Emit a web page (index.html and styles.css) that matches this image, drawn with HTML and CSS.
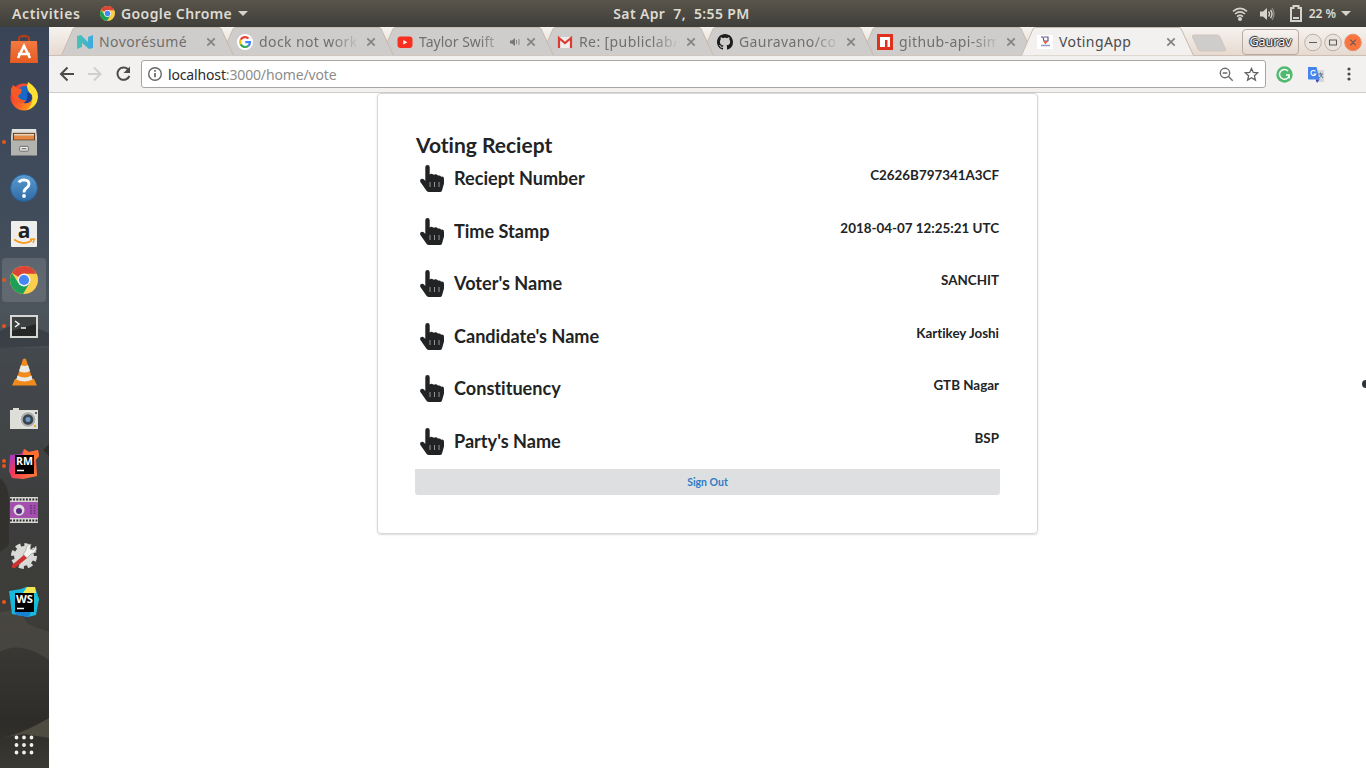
FILE: index.html
```html
<!DOCTYPE html>
<html lang="en">
<head>
<meta charset="utf-8">
<title>VotingApp</title>
<link rel="stylesheet" href="styles.css">
</head>
<body>
<svg class="defs" width="0" height="0">
  <defs>
    <linearGradient id="orange" x1="0" y1="0" x2="0" y2="1"><stop offset="0" stop-color="#f27a43"/><stop offset="1" stop-color="#e55c22"/></linearGradient>
    <linearGradient id="silver" x1="0" y1="0" x2="0" y2="1"><stop offset="0" stop-color="#e4e4e2"/><stop offset="1" stop-color="#a3a3a0"/></linearGradient>
    <linearGradient id="blue" x1="0" y1="0" x2="0" y2="1"><stop offset="0" stop-color="#5b9bd0"/><stop offset="1" stop-color="#2f6ba6"/></linearGradient>
    <linearGradient id="fox" x1="0" y1="0.2" x2="1" y2="0.8"><stop offset="0" stop-color="#f0303c"/><stop offset=".5" stop-color="#fb6425"/><stop offset="1" stop-color="#ffae1a"/></linearGradient>
    <linearGradient id="rm" x1="0" y1="0" x2="1" y2="1"><stop offset="0" stop-color="#7b3df5"/><stop offset=".45" stop-color="#f5365a"/><stop offset="1" stop-color="#ff8a2a"/></linearGradient>
    <linearGradient id="nov" x1="0" y1="0" x2="1" y2="0"><stop offset="0" stop-color="#47c3b4"/><stop offset="1" stop-color="#3ea9dc"/></linearGradient>
    <symbol id="tabshape" viewBox="0 0 173 29"><path d="M.5 28.500 12 2q.8-1.500 2.500-1.500H158q1.500 0 2.200 1.500L172.500 28.500"/></symbol>
    <symbol id="close" viewBox="0 0 10 10"><path d="M1.300 1.300 8.700 8.700M8.700 1.300 1.300 8.700" stroke="#85827f" stroke-width="1.700" fill="none"/></symbol>
    <symbol id="chrome" viewBox="0 0 28 28">
      <circle cx="14" cy="14" r="14" fill="#fbcf4b"/>
      <path d="M14 14 1.900 7A14 14 0 0 1 26.500 7.700H14Z" fill="#dc4437"/>
      <path d="M1.900 7A14 14 0 0 0 13 28L19.500 17.200 14 14 8.500 17.200Z" fill="#1c9f58"/>
      <circle cx="14" cy="14" r="6.500" fill="#f4f4f4"/><circle cx="14" cy="14" r="5.100" fill="#4587f3"/>
    </symbol>
    <symbol id="hand" viewBox="0 0 24 27">
      <path d="M5.300 2.200a2.200 2.200 0 0 1 4.400 0V9.400Q11.300 7.700 13.700 9.800 16.200 8.600 18 10.600 20 9.900 21.200 11.700 24 11 24 14V18.500L22 25.500Q21.500 27 20 27H9Q7.500 27 6.500 25.700L.4 17Q-.3 15 .8 14.200 2.400 13.200 4 14.600L5.300 15.900Z" fill="#222324"/>
      <path d="M10 17v5M14.500 17v5M19 17v5" stroke="#a5a5a5" stroke-width=".9"/>
    </symbol>
  </defs>
</svg>

<header class="topbar">
  <div class="topbar-left">
    <span class="activities">Activities</span>
    <svg class="app-logo" width="15" height="15"><use href="#chrome"/></svg>
    <span class="appname">Google Chrome</span>
    <svg width="10" height="5"><path d="M0 0h10L5 5Z" fill="#d6d3cc"/></svg>
  </div>
  <div class="clock">Sat Apr&nbsp; 7,&nbsp; 5:55 PM</div>
  <div class="topbar-right">
    <svg width="16" height="16" viewBox="0 0 16 16" fill="none" stroke="#d6d3cc" stroke-width="1.600"><path d="M1 5.300Q8-.5 15 5.300M3 8Q8 3.800 13 8M5 10.600Q8 8.200 11 10.600"/><circle cx="8" cy="13" r="2" fill="#d6d3cc" stroke="none"/></svg>
    <svg class="vol" width="17" height="14" viewBox="0 0 17 14"><path d="M1 4.500h3L8 1v12L4 9.500H1Z" fill="#d6d3cc"/><path d="M9.500 4.500q2 2.500 0 5M11.500 2.800q3 4.200 0 8.400" fill="none" stroke="#d6d3cc" stroke-width="1.400"/><path d="M13 1.200q4 5.800 0 11.600" fill="none" stroke="#8c8a84" stroke-width="1.300"/></svg>
    <svg class="bat" width="12" height="17" viewBox="0 0 12 17"><path d="M3.500 1h5v2H11v13H1V3h2.500Z" fill="none" stroke="#d6d3cc" stroke-width="2"/><path d="M3 12h6v2H3Z" fill="#d6d3cc"/></svg>
    <span class="percent">22 %</span>
    <svg width="10" height="5"><path d="M0 0h10L5 5Z" fill="#d6d3cc"/></svg>
  </div>
</header>

<div class="desktop">
  <nav class="dock">
    <svg class="dock-bg" width="49" height="741" viewBox="0 27 49 741" preserveAspectRatio="none">
      <path d="M0 331 12 325 36 328 49 333V346L0 348Z" fill="#3b4047"/>
      <path d="M0 348H49V450Q25 425 0 420Z" fill="#42464a" opacity=".7"/>
      <path d="M0 478Q8 484 9 500V545L0 552Z" fill="#33312e"/>
      <path d="M49 444 43 450 49 456Z" fill="#302e2b"/>
      <path d="M0 612 18 610 28 624 49 632V660Q20 640 0 652Z" fill="#4b4944" opacity=".8"/>
      <path d="M0 738Q20 735 49 718V738L24 734Z" fill="#4e4c40"/>
    </svg>
    <div class="app"><svg width="28" height="30" viewBox="0 0 28 30"><path d="M9 8V3.500Q9 1 14 1t5 2.500V8" fill="none" stroke="#b83e12" stroke-width="2"/><path d="M1 6H27L28 28H0Z" fill="url(#orange)"/><path d="M8 23 14 11 20 23M8 19h12" fill="none" stroke="#fff" stroke-width="2.600"/></svg></div>
    <div class="app"><svg width="28" height="29" viewBox="0 0 28 29"><circle cx="14" cy="15" r="13.500" fill="url(#fox)"/><circle cx="15" cy="12.500" r="8.500" fill="#1768c9"/><path d="M18 0Q28 6 28 15 27 25 17 28 24 22 22 13 17 9 17 4Z" fill="#ffdf32"/><path d="M1 7 3 3 7 6 12 7 11 11 8 14Q10 19 17 18 13 24 6 19 0 13 1 7Z" fill="#f55a26"/><path d="M17 10Q24 12 21 19 18 22 14 21 19 17 17 10Z" fill="#203b8c"/></svg></div>
    <div class="app"><i class="dot"></i><svg width="26" height="27" viewBox="0 0 27 28"><path d="M1 0H26L27 8V27H0V8Z" fill="url(#silver)"/><path d="M2 4H25V12H2Z" fill="#5d351b"/><path d="M3 7H24V11H3Z" fill="#e48843"/><path d="M3 5H24V7H3Z" fill="#f1d2b0"/><path d="M0 12h27V27.500H0Z" fill="#b2b2ae"/><rect x="9" y="18" width="9" height="5" rx="1" fill="#eee" stroke="#666"/><path d="M11 20.500h5" stroke="#555"/></svg></div>
    <div class="app"><svg width="28" height="28" viewBox="0 0 28 28"><circle cx="14" cy="14" r="13.500" fill="url(#blue)" stroke="#2b5f96"/><path d="M9 8.500Q10 5.800 14 5.800 19 6 19 10 19 12 16.500 14 14 15.700 14 18.500" fill="none" stroke="#fff" stroke-width="2.800"/><circle cx="14" cy="22" r="1.900" fill="#fff"/></svg></div>
    <div class="app"><svg width="26" height="26" viewBox="0 0 26 26"><rect width="26" height="26" rx="1" fill="#eeeeed"/><text x="13" y="17" text-anchor="middle" class="amazon">a</text><path d="M3 18.500Q12 25 21 19.500" fill="none" stroke="#f59a23" stroke-width="1.700"/><path d="M19 18.200 23.500 18 22 22" fill="none" stroke="#f59a23" stroke-width="1.400"/></svg></div>
    <div class="app active"><i class="dot"></i><svg width="28" height="28"><use href="#chrome"/></svg></div>
    <div class="app"><i class="dot"></i><svg width="28" height="23" viewBox="0 0 28 23"><rect width="28" height="23" fill="#d6d6d3"/><rect x="2" y="2" width="24" height="19" fill="#252727"/><path d="M2 2H26V9L2 16Z" fill="#3d4040"/><path d="M5 6 9 9 5 12M11 13h5" fill="none" stroke="#f5f5f5" stroke-width="1.500"/></svg></div>
    <div class="app"><svg width="25" height="28" viewBox="0 0 25 28"><path d="M3 21H22L25 27.500H0Z" fill="#f08a1c"/><path d="M11 1Q12.500 0 14 1L21 23Q12 27 4 23Z" fill="#f28a1d"/><path d="M9 7Q12.500 9 16 7L18 13Q12.500 16 7 13ZM5.500 17.500Q12.500 21.500 19.500 17.500L20.500 21.500Q12.500 25.500 4.300 21.500Z" fill="#e9e9e6"/></svg></div>
    <div class="app"><svg width="28" height="21" viewBox="0 0 28 21"><path d="M3 0H9V2H28V21H0V2H3Z" fill="#deded9"/><circle cx="18" cy="11.500" r="8" fill="#b0b0ad" stroke="#eee"/><circle cx="18" cy="11.500" r="5.300" fill="#3b4550"/><circle cx="18" cy="11.500" r="2.500" fill="#6c9bc9"/><circle cx="26" cy="5" r="1" fill="#333"/><circle cx="25" cy="18" r="1.200" fill="#eaa32c"/></svg></div>
    <div class="app"><i class="dot two"></i><svg width="30" height="30" viewBox="0 0 30 30"><path d="M1 6 12 5 15 0 20 3 29 1 30 7 27 10 28 27 14 30 3 29 0 22Z" fill="url(#rm)"/><path d="M15 0 20 3 29 1 30 7 26 12H13Z" fill="#fb7131"/><rect x="6" y="6" width="19" height="19"/><text x="7" y="16" class="ide" textLength="17" lengthAdjust="spacingAndGlyphs">RM</text><path d="M8 21.500h7" stroke="#fff" stroke-width="1.500"/></svg></div>
    <div class="app"><svg width="28" height="26" viewBox="0 0 28 26"><rect width="28" height="26" fill="#d5d5d2"/><path d="M0 2.500H28M0 23.500H28" stroke="#292929" stroke-width="2" stroke-dasharray="1.800 1.400"/><rect y="5" width="28" height="16" fill="#a34fae"/><path d="M21 8v10M24.500 8v10" stroke="#713380" stroke-width="1.800" stroke-dasharray="1.500 1"/><circle cx="9" cy="13" r="5.500" fill="#ddd"/><circle cx="9" cy="14" r="3" fill="#5a2d82"/></svg></div>
    <div class="app"><svg width="28" height="28" viewBox="0 0 28 28"><circle cx="14" cy="14" r="10" fill="#d9d9d6"/><circle cx="14" cy="14" r="11" fill="none" stroke="#d9d9d6" stroke-width="4" stroke-dasharray="5 3.640"/><path d="M13 14Q14 10 16 8 16 3 21 2L20 7 23 8 26 4Q28 10 21 12L16 17Z" fill="#f2f2ef" stroke="#999" stroke-width=".7"/><path d="M14 13 17 16 5 26Q1 27 2 23Z" fill="#cd3130"/></svg></div>
    <div class="app"><i class="dot"></i><svg width="30" height="30" viewBox="0 0 30 30"><path d="M0 4 12 2 17 0 26 0 30 12 27 28 19 30 3 27Z" fill="#16b8dc"/><path d="M5 24 22 23 20 30 7 28Z" fill="#1981d2"/><path d="M18 0H26L27 6H14Z" fill="#f2e752"/><path d="M25 6 30 13 26 18Z" fill="#17c5cf"/><rect x="6" y="6" width="19" height="19"/><text x="7" y="16" class="ide" textLength="17" lengthAdjust="spacingAndGlyphs">WS</text><path d="M8 21.500h7" stroke="#fff" stroke-width="1.500"/></svg></div>
    <svg class="grid-icon" width="20" height="20" viewBox="0 0 20 20" fill="none" stroke="#f1f0ed" stroke-width="3.800" stroke-linecap="round" stroke-dasharray="0 7.500"><path d="M2.500 2.500h15.100M2.500 10h15.100M2.500 17.500h15.100"/></svg>
  </nav>

  <section class="browser">
    <div class="tabstrip">
      <div class="tab t1"><svg class="shape"><use href="#tabshape"/></svg><svg class="fav" viewBox="0 0 16 16"><path d="M0 2 4 1 11 8V3L16 1V14L12 15 5 9V13L0 15Z" fill="url(#nov)"/></svg><span class="title">Novorésumé</span><svg class="x"><use href="#close"/></svg></div>
      <div class="tab t2"><svg class="shape"><use href="#tabshape"/></svg><svg class="fav" viewBox="0 0 16 16"><circle cx="8" cy="8" r="8" fill="#fff"/><g fill="none" stroke-width="2.200"><path d="M11.500 4.500A5 5 0 0 0 3.600 5.700" stroke="#ea4335"/><path d="M3.600 5.700A5 5 0 0 0 3.600 10.300" stroke="#fbbc05"/><path d="M3.600 10.300A5 5 0 0 0 11.300 11.800" stroke="#34a853"/><path d="M11.300 11.800Q13 10.400 13 8.200H8.300" stroke="#4285f4"/></g></svg><span class="title fade">dock not work</span><svg class="x"><use href="#close"/></svg></div>
      <div class="tab t3"><svg class="shape"><use href="#tabshape"/></svg><svg class="fav" viewBox="0 0 16 16"><rect x=".5" y="2.500" width="15" height="11.500" rx="3" fill="#f8301f"/><path d="M6.300 6v4.600L10.300 8.300Z" fill="#fff"/></svg><span class="title fade short">Taylor Swift</span><svg class="sound" width="10" height="8" viewBox="0 0 10 8"><path d="M0 2.500h2L5 0v8L2 5.500H0Z" fill="#777"/><path d="M6.500 2v4M9 1v6" stroke="#888"/></svg><svg class="x"><use href="#close"/></svg></div>
      <div class="tab t4"><svg class="shape"><use href="#tabshape"/></svg><svg class="fav" viewBox="0 0 16 16"><path d="M1 3H15V14H1Z" fill="#eee"/><path d="M2 14V4L8 9 14 4V14" fill="none" stroke="#dd3a30" stroke-width="2.200"/></svg><span class="title fade">Re: [publiclab/</span><svg class="x"><use href="#close"/></svg></div>
      <div class="tab t5"><svg class="shape"><use href="#tabshape"/></svg><svg class="fav" viewBox="0 0 16 16"><path fill="#1d1c1c" d="M8 0C3.580 0 0 3.580 0 8c0 3.540 2.290 6.530 5.470 7.590.4.070.55-.17.55-.38 0-.19-.01-.82-.01-1.490-2.010.37-2.530-.49-2.690-.94-.09-.23-.48-.94-.82-1.130-.28-.15-.68-.52-.01-.53.63-.01 1.080.58 1.230.82.72 1.210 1.870.87 2.330.66.070-.52.28-.87.51-1.070-1.780-.2-3.640-.89-3.640-3.950 0-.87.31-1.590.82-2.150-.08-.2-.36-1.020.08-2.120 0 0 .67-.21 2.200.82.640-.18 1.320-.27 2-.27s1.360.09 2 .27c1.530-1.040 2.200-.82 2.200-.82.440 1.100.160 1.920.080 2.120.510.560.820 1.270.820 2.150 0 3.070-1.870 3.750-3.650 3.950.290.250.540.730.540 1.480 0 1.070-.01 1.930-.01 2.200 0 .21.150.46.550.38A8 8 0 0 0 16 8c0-4.420-3.580-8-8-8Z"/></svg><span class="title fade">Gauravano/co</span><svg class="x"><use href="#close"/></svg></div>
      <div class="tab t6"><svg class="shape"><use href="#tabshape"/></svg><svg class="fav" viewBox="0 0 16 16"><path d="M0 0H16V16H0Z" fill="#e0301e"/><path d="M3 3H13V13H10.500V6H8V13H3Z" fill="#fff"/></svg><span class="title fade">github-api-sim</span><svg class="x"><use href="#close"/></svg></div>
      <div class="tab t7 current"><svg class="shape"><use href="#tabshape"/></svg><svg class="fav" viewBox="0 0 16 16"><path d="M0 1H16V15H0Z" fill="#fff"/><path d="M4 3h2l1 4h4V3H7" fill="none" stroke="#66558f" stroke-width="1.200"/><path d="M6 7h5L8.500 10.500Z" fill="#ee5d48"/><path d="M4 11.500h9" stroke="#9a9acd" stroke-width="1.500"/></svg><span class="title">VotingApp</span><svg class="x"><use href="#close"/></svg></div>
      <svg class="newtab" width="36" height="18" viewBox="0 0 36 18"><path d="M2.500 1H26q2 0 3 2L34.500 15q.5 2-1.500 2H10Q8 17 7 15L1.500 3Q1 1 2.500 1Z" fill="#cfcdcb" stroke="#d3c5b8"/></svg>
      <div class="user">Gaurav</div>
      <svg class="wins" width="58" height="19" viewBox="0 0 58 19"><g fill="#eae4df" stroke="#bdb1a7"><circle cx="9" cy="9.500" r="8.300"/><circle cx="29" cy="9.500" r="8.300"/></g><circle cx="49" cy="9.500" r="8.300" fill="#fb7440" stroke="#e3906d"/><path d="M5 9.500h8M25.500 7h7v5h-7ZM46.200 6.700l5.600 5.600M51.800 6.700l-5.600 5.600" fill="none" stroke="#605a55" stroke-width="1.100"/></svg>
    </div>
    <div class="toolbar">
      <svg class="navs" width="74" height="18" viewBox="0 0 74 18" fill="none" stroke-width="2"><path d="M15 9H2M8.500 2.500 2 9l6.500 6.500" stroke="#4c4b4a"/><path d="M29 9H41.500M35 2.500 41.500 9 35 15.500" stroke="#d0cfce"/><path d="M69 4.200A6.200 6.200 0 1 0 70.400 11" stroke="#4c4b4a"/><path d="M71 1.500V8H64.500Z" fill="#4c4b4a"/></svg>
      <div class="omnibox">
        <svg width="16" height="16" viewBox="0 0 16 16" fill="none" stroke="#666"><circle cx="8" cy="8" r="6.300" stroke-width="1.400"/><path d="M8 7v4.200M8 4v1.700" stroke-width="1.700"/></svg>
        <span class="url"><b>localhost</b>:3000/home/vote</span>
        <svg class="mag" width="15" height="15" viewBox="0 0 15 15" fill="none" stroke="#6c6c6c" stroke-width="1.400"><circle cx="6" cy="6" r="4.700"/><path d="M9.500 9.500 13.700 13.700M3.700 6h4.600"/></svg>
        <svg width="15" height="15" viewBox="0 0 15 15"><path d="m7.500 1.500 1.800 4 4.400.4-3.300 2.900 1 4.300-3.900-2.300-3.900 2.300 1-4.300L1.300 5.900l4.400-.4Z" fill="none" stroke="#606060" stroke-width="1.300"/></svg>
      </div>
      <svg class="gram" width="17" height="17" viewBox="0 0 17 17"><circle cx="8.500" cy="8.500" r="8.200" fill="#51b970"/><path d="M12 5A4.900 4.900 0 1 0 13.300 9H10M13.200 9v3.500" fill="none" stroke="#fff" stroke-width="1.400"/></svg>
      <svg class="trans" width="16" height="17" viewBox="0 0 16 17"><path d="M6 4H16V16H9Z" fill="#d3d7dc"/><path d="M0 1H8.500L11.500 13.500H1Q0 13.500 0 12.500Z" fill="#4385ed"/><path d="M7.500 13.500h4L9 17Z" fill="#3449b8"/><path d="M7.500 5.400A2.500 2.500 0 1 0 7.800 8H5.500" fill="none" stroke="#fff" stroke-width="1.100"/><path d="M10 8h5M12.500 6.500V8Q13 10 15 12M14 8Q13 11 11 12" fill="none" stroke="#687d91"/></svg>
      <svg class="dots" width="4" height="14" viewBox="0 0 4 14" fill="#4b4a49"><circle cx="2" cy="2" r="1.600"/><circle cx="2" cy="7" r="1.600"/><circle cx="2" cy="12" r="1.600"/></svg>
    </div>
    <main class="page">
      <article class="card">
        <h1>Voting Reciept</h1>
        <div class="row"><svg class="hand"><use href="#hand"/></svg><span class="label">Reciept Number</span><span class="value">C2626B797341A3CF</span></div>
        <div class="row"><svg class="hand"><use href="#hand"/></svg><span class="label">Time Stamp</span><span class="value">2018-04-07 12:25:21 UTC</span></div>
        <div class="row"><svg class="hand"><use href="#hand"/></svg><span class="label">Voter's Name</span><span class="value">SANCHIT</span></div>
        <div class="row"><svg class="hand"><use href="#hand"/></svg><span class="label">Candidate's Name</span><span class="value">Kartikey Joshi</span></div>
        <div class="row"><svg class="hand"><use href="#hand"/></svg><span class="label">Constituency</span><span class="value">GTB Nagar</span></div>
        <div class="row"><svg class="hand"><use href="#hand"/></svg><span class="label">Party's Name</span><span class="value">BSP</span></div>
        <a class="signout">Sign Out</a>
      </article>
      <i class="edge-dot"></i>
    </main>
  </section>
</div>
</body>
</html>
```
FILE: styles.css
```css
* { box-sizing: border-box; }
body { margin: 0; width: 1366px; height: 768px; overflow: hidden; background: #fff; font-family: "Noto Sans", "Open Sans", sans-serif; }
svg { display: block; flex: none; }
.defs { position: absolute; }

.topbar { height: 27px; display: grid; grid-template-columns: 1fr auto 1fr; align-items: center; background: linear-gradient(#59554c, #3f3e39); color: #dfdbd2; font-size: 14px; font-weight: 600; line-height: 26px; padding: 0 15px 0 12px; white-space: nowrap; }
.topbar-left, .topbar-right { display: flex; align-items: center; }
.topbar-right { justify-content: flex-end; }
.activities { width: 88px; letter-spacing: .6px; }
.appname { margin: 0 6px; width: 111px; letter-spacing: .4px; }
.clock { letter-spacing: .37px; }
.vol { margin-left: 11px; }
.bat { margin-left: 14px; }
.percent { margin: 0 5px 0 7px; font-size: 12px; }

.desktop { display: flex; height: 741px; }
.dock { position: relative; width: 49px; display: flex; flex-direction: column; background: linear-gradient(#3a4457, #414c5b 25%, #4c545c 38%, #44484a 50%, #3c3d3d 65%, #3d3c38 80%, #2d2c28 94%, #3a3932); }
.dock-bg { position: absolute; inset: 0; }
.app { position: relative; height: 46px; width: 49px; display: flex; align-items: center; justify-content: center; padding-right: 1px; }
.active::before { content: ""; position: absolute; left: 2px; top: 1px; width: 44px; height: 44px; border-radius: 4px; background: rgba(255,255,255,.13); }
.app > svg { position: relative; }
.app > .dot { position: absolute; left: 2px; top: 21px; width: 4px; height: 4px; border-radius: 50%; background: #e95420; }
.app > .two { top: 18px; box-shadow: 0 5px #e95420; }
.amazon { font: bold 21px "Open Sans", sans-serif; fill: #222; }
.ide { font: bold 11px "Open Sans", sans-serif; fill: #fff; }
.grid-icon { position: relative; margin: 110px 0 0 14px; }

.browser { width: 1317px; display: flex; flex-direction: column; }
.tabstrip { height: 29px; display: flex; background: linear-gradient(#f5f2ef, #e6d9cf); position: relative; padding-left: 12px; align-items: center; box-shadow: inset 0 -1px #cdbfb3; }
.tab { position: relative; width: 173px; height: 29px; margin-right: -13px; padding: 1px 0 0 16px; display: flex; align-items: center; flex: none; }
.t1 { z-index: 6; } .t2 { z-index: 5; } .t3 { z-index: 4; } .t4 { z-index: 3; } .t5 { z-index: 2; } .t6 { z-index: 1; } .t7 { z-index: 8; }
.shape { position: absolute; left: 0; top: 0; width: 173px; height: 29px; fill: #cfcdcb; stroke: #c8b9ac; }
.current .shape { fill: #f2f1f0; }
.fav { position: relative; width: 16px; height: 16px; }
.title { position: relative; margin-left: 6px; width: 97px; white-space: nowrap; font-size: 14px; line-height: 22px; color: #716f6d; letter-spacing: .4px; }
.current .title { color: #4c4b49; }
.fade { -webkit-mask-image: linear-gradient(90deg, #000 75%, transparent 105%); mask-image: linear-gradient(90deg, #000 75%, transparent 105%); }
.short { width: 82px; letter-spacing: 0; }
.sound { position: relative; margin-left: 9px; }
.x { position: relative; width: 10px; height: 10px; margin-left: 10px; }
.sound + .x { margin-left: 6px; }
.newtab { margin: 2px 0 0 10px; }
.user { margin: 1px 0 0 15px; width: 57px; height: 26px; border: 1px solid #b9aaa0; border-radius: 4px; background: linear-gradient(#f6f3f0, #e5d9d0); text-align: center; font-size: 12.5px; line-height: 24px; color: #fff; text-shadow: 1px 0 1px #222, -1px 0 1px #222, 0 1px 1px #222, 0 -1px 1px #222; }
.wins { margin: 1px 0 0 5px; }

.toolbar { height: 37px; display: flex; align-items: center; background: #f2f1f0; border-bottom: 1px solid #cfcdcb; padding-left: 10px; }
.omnibox { margin-left: 8px; width: 1125px; height: 28px; border: 1px solid #a8a6a4; border-radius: 3px; background: #fff; display: flex; align-items: center; padding: 0 6px 0 5px; }
.url { flex: 1; margin-left: 5px; font-size: 14px; letter-spacing: -.15px; color: #8d8d8d; }
.url b { font-weight: 400; color: #2b2b2b; }
.mag { margin-right: 10px; }
.gram { margin-left: 10px; }
.trans { margin-left: 15px; }
.dots { margin-left: 23px; }

.page { position: relative; flex: 1; background: #fff; font-family: Lato, sans-serif; font-variant-ligatures: none; color: #222324; }
.card { margin-left: 328px; width: 661px; height: 441px; border: 1px solid #d6d7d8; border-radius: 4px; box-shadow: 0 1px 2px rgba(34,36,38,.15); padding: 39px 37px 0; }
h1 { margin: 0; padding-left: 1px; font-size: 21px; line-height: 24px; font-weight: 700; height: 31px; }
.row { display: flex; height: 52.6px; align-items: flex-start; }
.hand { width: 24px; height: 27px; margin: 1px 10px 0 5px; }
.label { flex: 1; font-size: 18.1px; line-height: 28px; font-weight: 700; }
.value { font-size: 13.4px; line-height: 23px; font-weight: 700; padding-right: 1px; }
.signout { display: block; margin-top: -11px; height: 26px; background: #dedfe1; border-radius: 0 0 3px 3px; text-align: center; color: #2f7cc4; font-size: 10.5px; line-height: 26px; font-weight: 700; }
.edge-dot { position: absolute; right: 0; top: 287px; width: 4px; height: 8px; border-radius: 4px 0 0 4px; background: #2e3436; }
```
